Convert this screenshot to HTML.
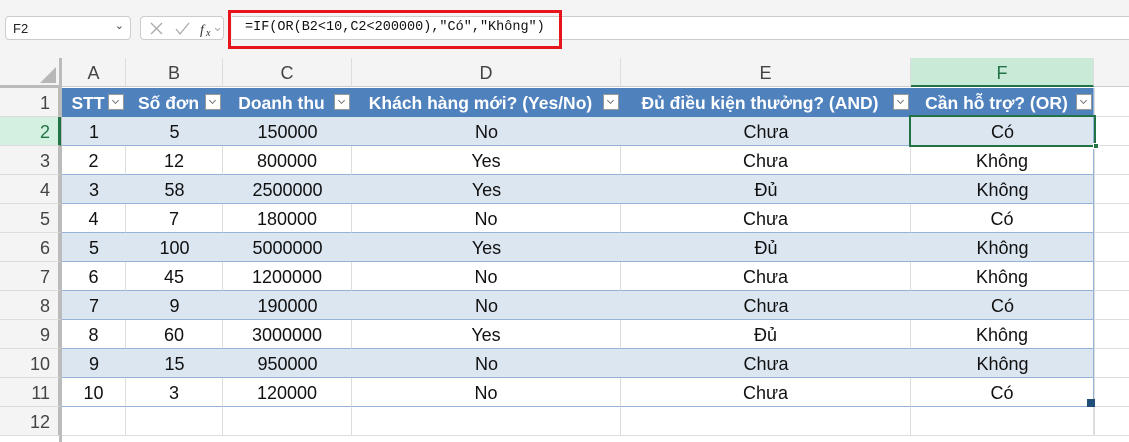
<!DOCTYPE html>
<html><head><meta charset="utf-8">
<style>
*{box-sizing:border-box;margin:0;padding:0}
html,body{width:1129px;height:442px;overflow:hidden}
body{background:#fff;font-family:"Liberation Sans",sans-serif;position:relative}
.abs{position:absolute}
.top{left:0;top:0;width:1129px;height:58px;background:#f4f4f4}
.nb{left:5px;top:16px;width:126px;height:24px;background:#fff;border:1px solid #ccc;border-radius:4px;font-size:13px;padding:4px 0 0 7px;color:#222}
.ib{left:140px;top:16px;width:84px;height:24px;background:#fff;border:1px solid #ccc;border-radius:4px}
.fx{left:232px;top:16px;width:897px;height:24px;background:#fff;border-top:1px solid #ccc;border-bottom:1px solid #ccc;font-family:"Liberation Mono",monospace;font-size:13.5px;padding:3px 0 0 13px;color:#111}
.red{left:228px;top:10px;width:334px;height:39px;border:3px solid #e8141c}
.c{position:absolute;height:29px;line-height:30px;text-align:center;font-size:18px;color:#111;white-space:nowrap}
.rh{position:absolute;left:0;width:61px;height:29px;line-height:30px;text-align:right;padding-right:8px;font-size:18px;color:#444;background:#f4f4f4;border-bottom:1px solid #ddd}
.ch{position:absolute;top:58px;height:29px;line-height:30px;text-align:center;font-size:18px;color:#444;background:#f4f4f4;border-right:1px solid #ddd}
.dd{display:inline-block;width:16px;height:16px;background:#fff;border:1px solid #999;position:absolute;top:6px;right:2px}
.dd:after{content:"";position:absolute;left:4px;top:3px;width:4px;height:4px;border-right:1px solid #777;border-bottom:1px solid #777;transform:rotate(45deg)}
.hd{background:#4f81bd;color:#fff;font-weight:bold;font-size:17.5px}
</style></head><body>
<div class="abs top"></div>
<div class="abs nb">F2<span style="position:absolute;right:6px;top:2px;font-size:11px;color:#444">&#8964;</span></div>
<div class="abs ib"><svg width="84" height="24"><path d="M10 6l11 11M21 6L10 17" stroke="#aaa" stroke-width="1.3" fill="none"/><path d="M35 12l4 5 9-11" stroke="#aaa" stroke-width="1.3" fill="none"/><text x="59" y="17" font-family="Liberation Serif" font-style="italic" font-size="14" fill="#333">f</text><text x="65" y="19" font-family="Liberation Serif" font-style="italic" font-size="10" fill="#333">x</text><path d="M74 11l2.5 2.5 2.5-2.5" stroke="#aaa" fill="none"/></svg></div>
<div class="abs fx">=IF(OR(B2&lt;10,C2&lt;200000),"Có","Không")</div>
<div class="abs red"></div>

<div class="ch" style="left:0;width:62px;border-right:3px solid #bbb;border-bottom:3px solid #bbb;height:30px"><svg class="abs" style="left:40px;top:9px" width="16" height="16"><path d="M16 0V16H0Z" fill="#b8b8b8"/></svg></div>
<div class="ch" style="left:62px;width:64px;border-bottom:1px solid #ccc">A</div>
<div class="ch" style="left:126px;width:97px;border-bottom:1px solid #ccc">B</div>
<div class="ch" style="left:223px;width:129px;border-bottom:1px solid #ccc">C</div>
<div class="ch" style="left:352px;width:269px;border-bottom:1px solid #ccc">D</div>
<div class="ch" style="left:621px;width:290px;border-bottom:1px solid #ccc">E</div>
<div class="ch" style="left:911px;width:183px;background:#caead8;color:#217346;border-bottom:2px solid #217346">F</div>
<div class="ch" style="left:1094px;width:35px;border-bottom:1px solid #ccc;border-right:none"></div>
<div class="abs" style="left:59px;top:58px;width:3px;height:384px;background:#bbb"></div>

<div id="g"></div>
<script>
var cols=[62,126,223,352,621,911,1094];
var hdr=["STT","Số đơn","Doanh thu","Khách hàng mới? (Yes/No)","Đủ điều kiện thưởng? (AND)","Cần hỗ trợ? (OR)"];
var d=[[1,5,150000,"No","Chưa","Có"],[2,12,800000,"Yes","Chưa","Không"],[3,58,2500000,"Yes","Đủ","Không"],[4,7,180000,"No","Chưa","Có"],[5,100,5000000,"Yes","Đủ","Không"],[6,45,1200000,"No","Chưa","Không"],[7,9,190000,"No","Chưa","Có"],[8,60,3000000,"Yes","Đủ","Không"],[9,15,950000,"No","Chưa","Không"],[10,3,120000,"No","Chưa","Có"]];
var h="";
for(var r=0;r<12;r++){
 var y=88+r*29;
 var st=r==1?"background:#d3f0e0;color:#217346;border-right:3px solid #217346;":"border-right:3px solid #bbb;";
 h+='<div class="rh" style="top:'+y+'px;'+st+'">'+(r+1)+'</div>';
 h+='<div class="abs" style="left:1094px;top:'+y+'px;width:35px;height:29px;border-bottom:1px solid #ddd;border-left:1px solid #ddd"></div>';
 for(var c=0;c<6;c++){
  var x=cols[c],w=cols[c+1]-x;
  if(r==0){h+='<div class="c hd" style="left:'+x+'px;top:'+y+'px;width:'+w+'px;padding-right:12px">'+hdr[c]+'<span class="dd"></span></div>';}
  else if(r<=10){var band=(r%2==1);
   h+='<div class="c" style="left:'+x+'px;top:'+y+'px;width:'+w+'px;background:'+(band?'#dce6f1':'#fff')+';border-bottom:1px solid #95b3d7;'+(band?'':'border-right:1px solid #ddd;')+'">'+d[r-1][c]+'</div>';}
  else h+='<div class="c" style="left:'+x+'px;top:'+y+'px;width:'+w+'px;border-bottom:1px solid #ddd;border-right:1px solid #ddd"></div>';
 }
}
h+='<div class="abs" style="left:1093px;top:88px;width:1px;height:319px;background:#95b3d7"></div>';
h+='<div class="abs" style="left:909px;top:115px;width:187px;height:32px;border:2px solid #217346"></div>';
h+='<div class="abs" style="left:1093px;top:143px;width:6px;height:6px;background:#217346;border:1px solid #fff"></div>';
h+='<div class="abs" style="left:1087px;top:399px;width:8px;height:8px;background:#1f4e79"></div>';
document.getElementById("g").innerHTML=h;
</script>
</body></html>
